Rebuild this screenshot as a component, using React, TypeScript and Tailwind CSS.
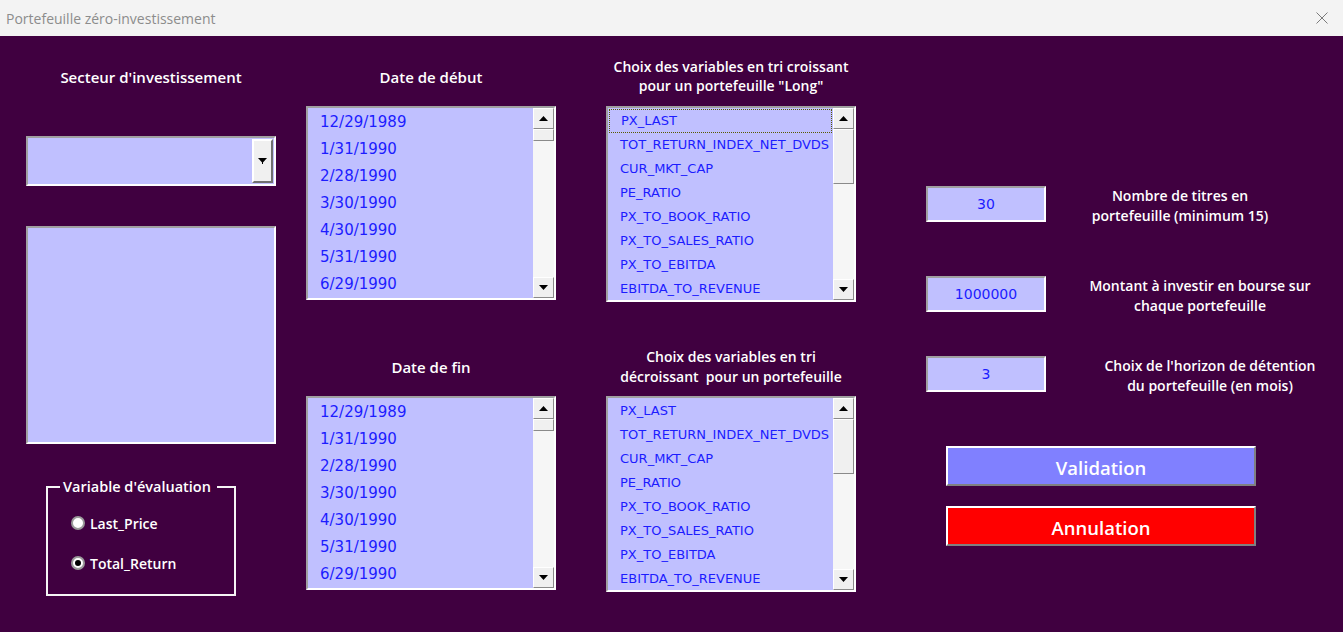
import React from "react";

const dates = ["12/29/1989", "1/31/1990", "2/28/1990", "3/30/1990", "4/30/1990", "5/31/1990", "6/29/1990"];
const vars = [
  "PX_LAST",
  "TOT_RETURN_INDEX_NET_DVDS",
  "CUR_MKT_CAP",
  "PE_RATIO",
  "PX_TO_BOOK_RATIO",
  "PX_TO_SALES_RATIO",
  "PX_TO_EBITDA",
  "EBITDA_TO_REVENUE",
];

const labelFont = "font-['Open_Sans','Noto_Sans',sans-serif]";
const listFont = "font-['DejaVu_Sans','Verdana',sans-serif]";

function Arrow({ dir }: { dir: "up" | "down" }) {
  return (
    <svg width="9" height="5" viewBox="0 0 9 5">
      {dir === "up" ? <polygon points="0,5 9,5 4.5,0" fill="#000" /> : <polygon points="0,0 9,0 4.5,5" fill="#000" />}
    </svg>
  );
}

function ScrollButton({ dir }: { dir: "up" | "down" }) {
  return (
    <div className="h-[21px] w-full flex items-center justify-center bg-[#f0f0f0] border border-t-white border-l-white border-b-[#8a8a8a] border-r-[#8a8a8a] shrink-0">
      <Arrow dir={dir} />
    </div>
  );
}

function ScrollBar({ thumb }: { thumb: number }) {
  return (
    <div className="w-[21px] h-full flex flex-col bg-[#f6f6f6] shrink-0">
      <ScrollButton dir="up" />
      <div
        className="w-full bg-[#f0f0f0] border border-t-white border-l-white border-b-[#8a8a8a] border-r-[#8a8a8a] shrink-0"
        style={{ height: thumb }}
      />
      <div className="flex-1" />
      <ScrollButton dir="down" />
    </div>
  );
}

function ListBox({
  items,
  rowH,
  textCls,
  thumb,
  height,
  focusFirst,
}: {
  items: string[];
  rowH: number;
  textCls: string;
  thumb: number;
  height: string;
  focusFirst?: boolean;
}) {
  return (
    <div className={`${height} w-[250px] border-2 border-t-[#a0a0a0] border-l-[#a0a0a0] border-b-white border-r-white flex bg-[#c0c0ff]`}>
      <div className="flex-1 overflow-hidden pt-px">
        {items.map((it, i) => (
          <div
            key={it}
            className={`${listFont} ${textCls} text-[#1c1cff] pl-[12px] flex items-center whitespace-nowrap ${
              focusFirst && i === 0 ? "outline-1 outline-dotted outline-[#5a5a00] -outline-offset-1 mx-px" : ""
            }`}
            style={{ height: rowH }}
          >
            {it}
          </div>
        ))}
      </div>
      <ScrollBar thumb={thumb} />
    </div>
  );
}

function Label({ children, cls = "" }: { children: React.ReactNode; cls?: string }) {
  return <div className={`${labelFont} font-semibold text-white text-center ${cls}`}>{children}</div>;
}

function InputBox({ value }: { value: string }) {
  return (
    <div className={`w-[120px] h-[36px] border-2 border-t-[#a0a0a0] border-l-[#a0a0a0] border-b-white border-r-white bg-[#c0c0ff] flex items-center justify-center ${listFont} text-[14px] text-[#1c1cff] shrink-0`}>
      {value}
    </div>
  );
}

function Radio({ checked, label }: { checked?: boolean; label: string }) {
  return (
    <div className="h-[20px] flex items-center pl-[23px]">
      <div className="w-[14px] h-[14px] rounded-full bg-white border-2 border-[#9a9a9a] flex items-center justify-center">
        {checked && <div className="w-[6px] h-[6px] rounded-full bg-black" />}
      </div>
      <span className={`${labelFont} font-semibold text-white text-[14px] ml-[5px]`}>{label}</span>
    </div>
  );
}

export default function App() {
  return (
    <div className="w-[1343px] h-[632px] flex flex-col overflow-hidden">
      <div className="h-[36px] bg-[#f3f3f3] flex items-center justify-between shrink-0">
        <span className={`${labelFont} text-[14px] text-[#8c8c8c] pl-[6px]`}>Portefeuille zéro-investissement</span>
        <svg width="12" height="12" viewBox="0 0 12 12" className="mr-[15px]">
          <path d="M0.5 0.5 L11.5 11.5 M11.5 0.5 L0.5 11.5" stroke="#7a7a7a" strokeWidth="1" />
        </svg>
      </div>
      <div className="flex-1 bg-[#400040] flex pl-[26px]">
        {/* Column 1 */}
        <div className="w-[250px] flex flex-col shrink-0">
          <Label cls="mt-[30px] h-[22px] leading-[22px] text-[15px]">Secteur d'investissement</Label>
          <div className="mt-[48px] h-[50px] border-2 border-t-[#a0a0a0] border-l-[#a0a0a0] border-b-white border-r-white bg-[#c0c0ff] flex justify-end items-stretch pr-px py-px">
            <div className="w-[21px] bg-[#f0f0f0] border-2 border-t-white border-l-white border-b-[#707070] border-r-[#707070] flex items-center justify-center">
              <svg width="9" height="6" viewBox="0 0 9 6">
                <polygon points="0,0 9,0 4.5,5" fill="#000" />
                <rect x="4" y="4" width="1" height="2" fill="#000" />
              </svg>
            </div>
          </div>
          <div className="mt-[40px] h-[218px] border-2 border-t-[#a0a0a0] border-l-[#a0a0a0] border-b-white border-r-white bg-[#c0c0ff]" />
          <fieldset className="mt-[33px] ml-[20px] w-[190px] h-[119px] border-2 border-[#f4f4f4] min-w-0">
            <legend className={`${labelFont} font-semibold text-white text-[14.5px] leading-[20px] ml-[12px] px-[3px] pr-[6px]`}>
              Variable d'évaluation
            </legend>
            <div className="mt-[16px] flex flex-col gap-[20px]">
              <Radio label="Last_Price" />
              <Radio label="Total_Return" checked />
            </div>
          </fieldset>
        </div>

        {/* Column 2 */}
        <div className="w-[250px] ml-[30px] flex flex-col shrink-0">
          <Label cls="mt-[30px] h-[22px] leading-[22px] text-[15px]">Date de début</Label>
          <div className="mt-[18px]">
            <ListBox items={dates} rowH={27} textCls="text-[15px]" thumb={12} height="h-[194px]" />
          </div>
          <Label cls="mt-[56px] h-[22px] leading-[22px] text-[15px]">Date de fin</Label>
          <div className="mt-[18px]">
            <ListBox items={dates} rowH={27} textCls="text-[15px]" thumb={12} height="h-[194px]" />
          </div>
        </div>

        {/* Column 3 */}
        <div className="w-[250px] ml-[50px] flex flex-col shrink-0">
          <Label cls="mt-[21px] h-[38px] leading-[19px] text-[14px]">
            Choix des variables en tri croissant
            <br />
            pour un portefeuille "Long"
          </Label>
          <div className="mt-[11px]">
            <ListBox items={vars} rowH={24} textCls="text-[13px]" thumb={55} height="h-[196px]" focusFirst />
          </div>
          <Label cls="mt-[45px] h-[40px] leading-[20px] text-[14px]">
            Choix des variables en tri
            <br />
            décroissant&nbsp; pour un portefeuille
          </Label>
          <div className="mt-[9px]">
            <ListBox items={vars} rowH={24} textCls="text-[13px]" thumb={55} height="h-[196px]" />
          </div>
        </div>

        {/* Column 4 */}
        <div className="ml-[70px] flex flex-col flex-1">
          <div className="mt-[150px] h-[40px] flex items-start">
            <InputBox value="30" />
            <Label cls="ml-[20px] w-[228px] leading-[20px] text-[14px]">
              Nombre de titres en
              <br />
              portefeuille (minimum 15)
            </Label>
          </div>
          <div className="mt-[50px] h-[40px] flex items-start">
            <InputBox value="1000000" />
            <Label cls="ml-[20px] w-[268px] leading-[20px] text-[14px]">
              Montant à investir en bourse sur
              <br />
              chaque portefeuille
            </Label>
          </div>
          <div className="mt-[40px] h-[40px] flex items-start">
            <InputBox value="3" />
            <Label cls="ml-[40px] w-[248px] leading-[20px] text-[14px]">
              Choix de l'horizon de détention
              <br />
              du portefeuille (en mois)
            </Label>
          </div>
          <button
            className={`mt-[50px] ml-[20px] w-[310px] h-[40px] pt-[4px] bg-[#8080ff] border-2 border-t-white border-l-white border-b-[#808080] border-r-[#808080] ${labelFont} font-semibold text-white text-[18.5px] flex items-center justify-center`}
          >
            Validation
          </button>
          <button
            className={`mt-[20px] ml-[20px] w-[310px] h-[40px] pt-[4px] bg-[#ff0000] border-2 border-t-white border-l-white border-b-[#808080] border-r-[#808080] ${labelFont} font-semibold text-white text-[18.5px] flex items-center justify-center`}
          >
            Annulation
          </button>
        </div>
      </div>
    </div>
  );
}
